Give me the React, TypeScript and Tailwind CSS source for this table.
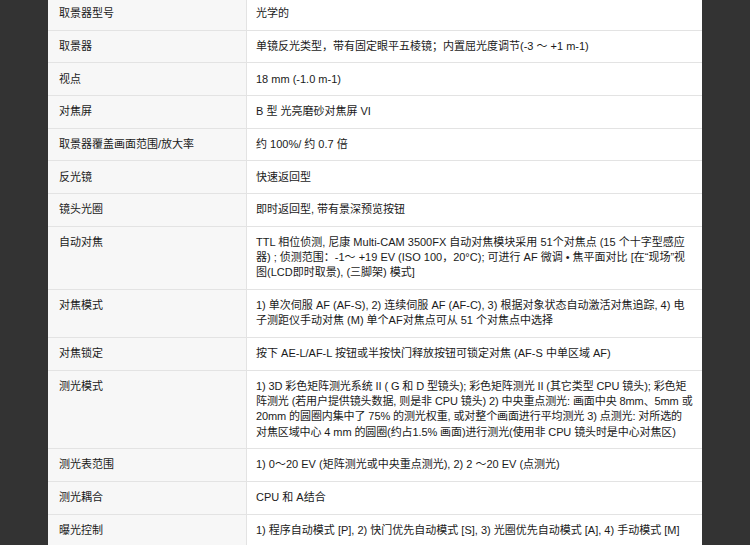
const rows: [string, string | string[]][] = [
  ["取景器型号", "光学的"],
  ["取景器", "单镜反光类型，带有固定眼平五棱镜；内置屈光度调节(-3 ～ +1 m-1)"],
  ["视点", "18 mm (-1.0 m-1)"],
  ["对焦屏", "B 型 光亮磨砂对焦屏 VI"],
  ["取景器覆盖画面范围/放大率", "约 100%/ 约 0.7 倍"],
  ["反光镜", "快速返回型"],
  ["镜头光圈", "即时返回型, 带有景深预览按钮"],
  [
    "自动对焦",
    "TTL 相位侦测, 尼康 Multi-CAM 3500FX 自动对焦模块采用 51个对焦点 (15 个十字型感应器) ; 侦测范围：-1～ +19 EV (ISO 100，20°C); 可进行 AF 微调 • 焦平面对比 [在“现场”视图(LCD即时取景), (三脚架) 模式]",
  ],
  [
    "对焦模式",
    "1) 单次伺服 AF (AF-S), 2) 连续伺服 AF (AF-C), 3) 根据对象状态自动激活对焦追踪, 4) 电子测距仪手动对焦 (M) 单个AF对焦点可从 51 个对焦点中选择",
  ],
  ["对焦锁定", "按下 AE-L/AF-L 按钮或半按快门释放按钮可锁定对焦 (AF-S 中单区域 AF)"],
  [
    "测光模式",
    [
      "1) 3D 彩色矩阵测光系统 II ( G 和 D 型镜头); 彩色矩阵测光 II (其它类型 CPU 镜头); 彩色矩",
      "阵测光 (若用户提供镜头数据, 则是非 CPU 镜头) 2) 中央重点测光: 画面中央 8mm、5mm 或",
      "20mm 的圆圈内集中了 75% 的测光权重, 或对整个画面进行平均测光 3) 点测光: 对所选的",
      "对焦区域中心 4 mm 的圆圈(约占1.5% 画面)进行测光(使用非 CPU 镜头时是中心对焦区)",
    ],
  ],
  ["测光表范围", "1) 0～20 EV (矩阵测光或中央重点测光), 2) 2 ～20 EV (点测光)"],
  ["测光耦合", "CPU 和 A结合"],
  ["曝光控制", "1) 程序自动模式 [P], 2) 快门优先自动模式 [S], 3) 光圈优先自动模式 [A], 4) 手动模式 [M]"],
];

export default function App() {
  return (
    <div className="h-[545px] w-full overflow-hidden bg-[#333333]">
      <div
        className="mx-auto -mt-[2px] w-[654px] text-[11px] leading-[15.3px] text-[#1a1a1a]"
        style={{ fontFamily: '"Liberation Sans", Arial, "Noto Sans CJK SC", sans-serif' }}
      >
        {rows.map(([label, value]) => (
          <div key={label} className="flex border-b border-[#e3e3e3]">
            <div className="w-[199px] shrink-0 border-r border-[#e3e3e3] bg-[#f7f7f7] py-[8.2px] pl-[11px] pr-2">
              {label}
            </div>
            <div className="min-w-0 flex-1 bg-white py-[8.2px] pl-[9px] pr-[10px]">
              {Array.isArray(value)
                ? value.map((line) => (
                    <div key={line} className="whitespace-nowrap tracking-[-0.1px]">
                      {line}
                    </div>
                  ))
                : value}
            </div>
          </div>
        ))}
      </div>
    </div>
  );
}
